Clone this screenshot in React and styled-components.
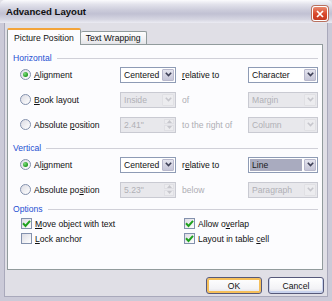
import React from 'react';
import styled, { createGlobalStyle } from 'styled-components';

const GlobalStyle = createGlobalStyle`
  html, body {
    margin: 0;
    padding: 0;
    background: #e0dfe6;
  }
  body {
    font-family: "Liberation Sans", Arial, sans-serif;
    font-size: 8.6px;
    color: #111;
  }
`;

const Window = styled.div`
  width: 332px;
  height: 301px;
  display: flex;
  flex-direction: column;
  overflow: hidden;
`;

const TitleBar = styled.div`
  flex: none;
  height: 23px;
  display: flex;
  align-items: center;
  justify-content: space-between;
  padding: 0 4px 0 6px;
  border-radius: 5px 5px 0 0;
  background: linear-gradient(
    #fbfbfd 0%,
    #e3e3ec 18%,
    #cbcbda 45%,
    #c1c1d3 60%,
    #d6d6e2 85%,
    #ececf3 100%
  );
`;

const Title = styled.span`
  font-weight: bold;
  font-size: 9.6px;
  color: #101010;
`;

const CloseButton = styled.div`
  width: 16px;
  height: 15px;
  margin-top: 4px;
  box-sizing: border-box;
  border: 1px solid #fff;
  border-radius: 3px;
  display: flex;
  align-items: center;
  justify-content: center;
  background: linear-gradient(#e88a70, #d9472b 55%, #c43a22);
  box-shadow: 0 0 0 1px #b9705e;
`;

const Body = styled.div`
  flex: 1;
  display: flex;
  flex-direction: column;
  background: #e0dfe6;
  border: 4px solid #cbcad8;
  border-top: none;
  box-shadow: inset 1px 0 #a9a9bb, inset -1px 0 #a9a9bb, inset 0 -1px #a9a9bb;
  padding: 5px 0 0 3px;
`;

const TabStrip = styled.div`
  display: flex;
  align-items: flex-end;
  height: 17px;
  margin-bottom: -1px;
  position: relative;
  z-index: 1;
`;

const Tab = styled.div`
  box-sizing: border-box;
  height: ${({ $active }) => ($active ? 17 : 13)}px;
  margin-bottom: ${({ $active }) => ($active ? 0 : 1)}px;
  padding: 0 ${({ $active }) => ($active ? 6 : 5)}px;
  display: flex;
  align-items: center;
  border: 1px solid #919b9c;
  border-bottom: none;
  border-left: ${({ $first }) => ($first ? '1px solid #919b9c' : 'none')};
  border-radius: 2px 2px 0 0;
  background: ${({ $active }) =>
    $active ? '#fcfcfe' : 'linear-gradient(#fefefe, #f1f1f3 60%, #e4e4e8)'};
  ${({ $active }) => $active && 'border-top: 2px solid #f3a43a; padding-top: 1px;'}
  color: #111;
`;

const Panel = styled.div`
  box-sizing: border-box;
  height: 226px;
  margin-right: 5px;
  border: 1px solid #919b9c;
  background: #fcfcfe;
  padding-top: 9px;
`;

const GroupHeader = styled.div`
  display: flex;
  align-items: center;
  height: 8px;
  margin-top: ${({ $gap }) => $gap || 0}px;
  padding: 0 4px 0 5px;
  color: #1e50d2;

  &::after {
    content: '';
    flex: 1;
    height: 1px;
    margin-left: 5px;
    background: #d0d0d8;
  }
`;

const Row = styled.div`
  display: flex;
  align-items: center;
  height: 25px;
  padding-left: 12px;
`;

const Radio = styled.span`
  flex: none;
  width: 11px;
  height: 11px;
  box-sizing: border-box;
  border-radius: 50%;
  border: 1px solid #8391ad;
  background: linear-gradient(135deg, #dcdce4, #ffffff);
  display: flex;
  align-items: center;
  justify-content: center;

  &::after {
    content: '';
    display: ${({ $checked }) => ($checked ? 'block' : 'none')};
    width: 5px;
    height: 5px;
    border-radius: 50%;
    background: radial-gradient(circle at 35% 35%, #7fdc7e, #1f9a1f 70%);
  }
`;

const RowLabel = styled.span`
  width: 86px;
  margin-left: 3px;
`;

const MidLabel = styled.span`
  width: 66px;
  margin-left: 6px;
  color: ${({ $disabled }) => ($disabled ? '#aeaeb4' : '#111')};
`;

const Field = styled.div`
  box-sizing: border-box;
  width: ${({ $width }) => $width}px;
  height: 16px;
  display: flex;
  align-items: stretch;
  border: 1px solid ${({ $disabled }) => ($disabled ? '#c9cad2' : '#8e9bb5')};
  background: ${({ $disabled }) => ($disabled ? '#e8e8ec' : '#fff')};
  color: ${({ $disabled }) => ($disabled ? '#b0b0b6' : '#111')};
`;

const FieldText = styled.span`
  flex: 1;
  display: flex;
  align-items: center;
  padding-left: 2px;
  margin: 1px;
  ${({ $selected }) => $selected && 'background: #a9abbf; color: #1a1a1a;'}
`;

const DropButton = styled.span`
  flex: none;
  width: 12px;
  margin: 1px;
  border-radius: 1px;
  display: flex;
  align-items: center;
  justify-content: center;
  background: ${({ $disabled }) =>
    $disabled ? '#ececef' : 'linear-gradient(#e4e4ee, #c5c5d7)'};
  border: 1px solid ${({ $disabled }) => ($disabled ? '#e0e0e4' : '#b8b8cc')};
  box-sizing: border-box;
`;

const SpinButton = styled.span`
  flex: none;
  width: 10px;
  margin: 1px;
  display: flex;
  flex-direction: column;
  gap: 1px;
`;

const SpinHalf = styled.span`
  flex: 1;
  display: flex;
  align-items: center;
  justify-content: center;
  background: #ececef;
  border: 1px solid #dfdfe4;
  box-sizing: border-box;
`;

const CheckGrid = styled.div`
  display: grid;
  grid-template-columns: 163px 1fr;
  grid-auto-rows: 15px;
  margin-top: 3px;
  padding-left: 13px;
`;

const CheckItem = styled.label`
  display: flex;
  align-items: center;
  gap: 3px;
`;

const Box = styled.span`
  flex: none;
  width: 11px;
  height: 11px;
  box-sizing: border-box;
  border: 1px solid #8391ad;
  background: linear-gradient(135deg, #dcdce4, #ffffff);
  display: flex;
  align-items: center;
  justify-content: center;
`;

const Footer = styled.div`
  display: flex;
  justify-content: flex-end;
  gap: 6px;
  margin-top: 7px;
  padding-right: 4px;
`;

const Button = styled.div`
  box-sizing: border-box;
  width: 56px;
  height: 17px;
  display: flex;
  align-items: center;
  justify-content: center;
  border: 1px solid #56597a;
  border-radius: 3px;
  background: linear-gradient(#ffffff, #f3f3f6 70%, #dddde6);
  box-shadow: ${({ $default }) =>
    $default ? 'inset 0 0 0 2px #f5bf5a' : 'inset 0 -1px 0 1px #c9d3ee'};
  color: #111;
`;

const Chevron = ({ disabled }) => (
  <svg width="7" height="5" viewBox="0 0 7 5">
    <path d="M0.8 0.8 L3.5 3.6 L6.2 0.8" fill="none" stroke={disabled ? '#c6c6cc' : '#3f4157'} strokeWidth="1.6" />
  </svg>
);

const Tri = ({ up }) => (
  <svg width="5" height="3" viewBox="0 0 5 3">
    <path d={up ? 'M0 3 L2.5 0 L5 3 Z' : 'M0 0 L2.5 3 L5 0 Z'} fill="#c6c6cc" />
  </svg>
);

const Check = () => (
  <svg width="9" height="9" viewBox="0 0 9 9">
    <path d="M1 4.3 L3.5 6.9 L8 1.8" fill="none" stroke="#1fa11f" strokeWidth="2" />
  </svg>
);

function Select({ value, width, disabled, selected }) {
  return (
    <Field $width={width} $disabled={disabled}>
      <FieldText $selected={selected}>{value}</FieldText>
      <DropButton $disabled={disabled}>
        <Chevron disabled={disabled} />
      </DropButton>
    </Field>
  );
}

function Spinner({ value, width }) {
  return (
    <Field $width={width} $disabled>
      <FieldText>{value}</FieldText>
      <SpinButton>
        <SpinHalf><Tri up /></SpinHalf>
        <SpinHalf><Tri /></SpinHalf>
      </SpinButton>
    </Field>
  );
}

// label with one underlined access key
function Key({ text, at }) {
  return (
    <>
      {text.slice(0, at)}
      <u>{text[at]}</u>
      {text.slice(at + 1)}
    </>
  );
}

const horizontalRows = [
  { label: ['Alignment', 0], checked: true, left: { value: 'Centered' }, mid: ['relative to', 0], right: { value: 'Character' } },
  { label: ['Book layout', 0], left: { value: 'Inside', disabled: true }, mid: ['of'], right: { value: 'Margin', disabled: true } },
  { label: ['Absolute position', 9], left: { value: '2.41"', spin: true }, mid: ['to the right of'], right: { value: 'Column', disabled: true } }
];

const verticalRows = [
  { label: ['Alignment', 2], checked: true, left: { value: 'Centered' }, mid: ['relative to', 1], right: { value: 'Line', selected: true } },
  { label: ['Absolute position', 11], left: { value: '5.23"', spin: true }, mid: ['below'], right: { value: 'Paragraph', disabled: true } }
];

const options = [
  { text: 'Move object with text', at: 0, checked: true },
  { text: 'Allow overlap', at: 7, checked: true },
  { text: 'Lock anchor', at: 0, checked: false },
  { text: 'Layout in table cell', at: 16, checked: true }
];

function PositionRow({ row }) {
  const [midText, midKey] = row.mid;
  const midDisabled = midKey === undefined;
  return (
    <Row>
      <Radio $checked={row.checked} />
      <RowLabel>
        <Key text={row.label[0]} at={row.label[1]} />
      </RowLabel>
      {row.left.spin ? (
        <Spinner value={row.left.value} width={56} />
      ) : (
        <Select value={row.left.value} width={56} disabled={row.left.disabled} />
      )}
      <MidLabel $disabled={midDisabled}>
        {midDisabled ? midText : <Key text={midText} at={midKey} />}
      </MidLabel>
      <Select value={row.right.value} width={70} disabled={row.right.disabled} selected={row.right.selected} />
    </Row>
  );
}

export default function App() {
  return (
    <>
      <GlobalStyle />
      <Window>
        <TitleBar>
          <Title>Advanced Layout</Title>
          <CloseButton>
            <svg width="8" height="8" viewBox="0 0 8 8">
              <path d="M1 1 L7 7 M7 1 L1 7" stroke="#fff" strokeWidth="1.7" />
            </svg>
          </CloseButton>
        </TitleBar>
        <Body>
          <TabStrip>
            <Tab $active $first>Picture Position</Tab>
            <Tab>Text Wrapping</Tab>
          </TabStrip>
          <Panel>
            <GroupHeader>Horizontal</GroupHeader>
            {horizontalRows.map((row) => (
              <PositionRow key={row.label[0] + row.left.value} row={row} />
            ))}
            <GroupHeader $gap={7}>Vertical</GroupHeader>
            {verticalRows.map((row) => (
              <PositionRow key={row.label[0] + row.left.value} row={row} />
            ))}
            <GroupHeader $gap={3}>Options</GroupHeader>
            <CheckGrid>
              {options.map((opt) => (
                <CheckItem key={opt.text}>
                  <Box>{opt.checked && <Check />}</Box>
                  <span>
                    <Key text={opt.text} at={opt.at} />
                  </span>
                </CheckItem>
              ))}
            </CheckGrid>
          </Panel>
          <Footer>
            <Button $default>OK</Button>
            <Button>Cancel</Button>
          </Footer>
        </Body>
      </Window>
    </>
  );
}
